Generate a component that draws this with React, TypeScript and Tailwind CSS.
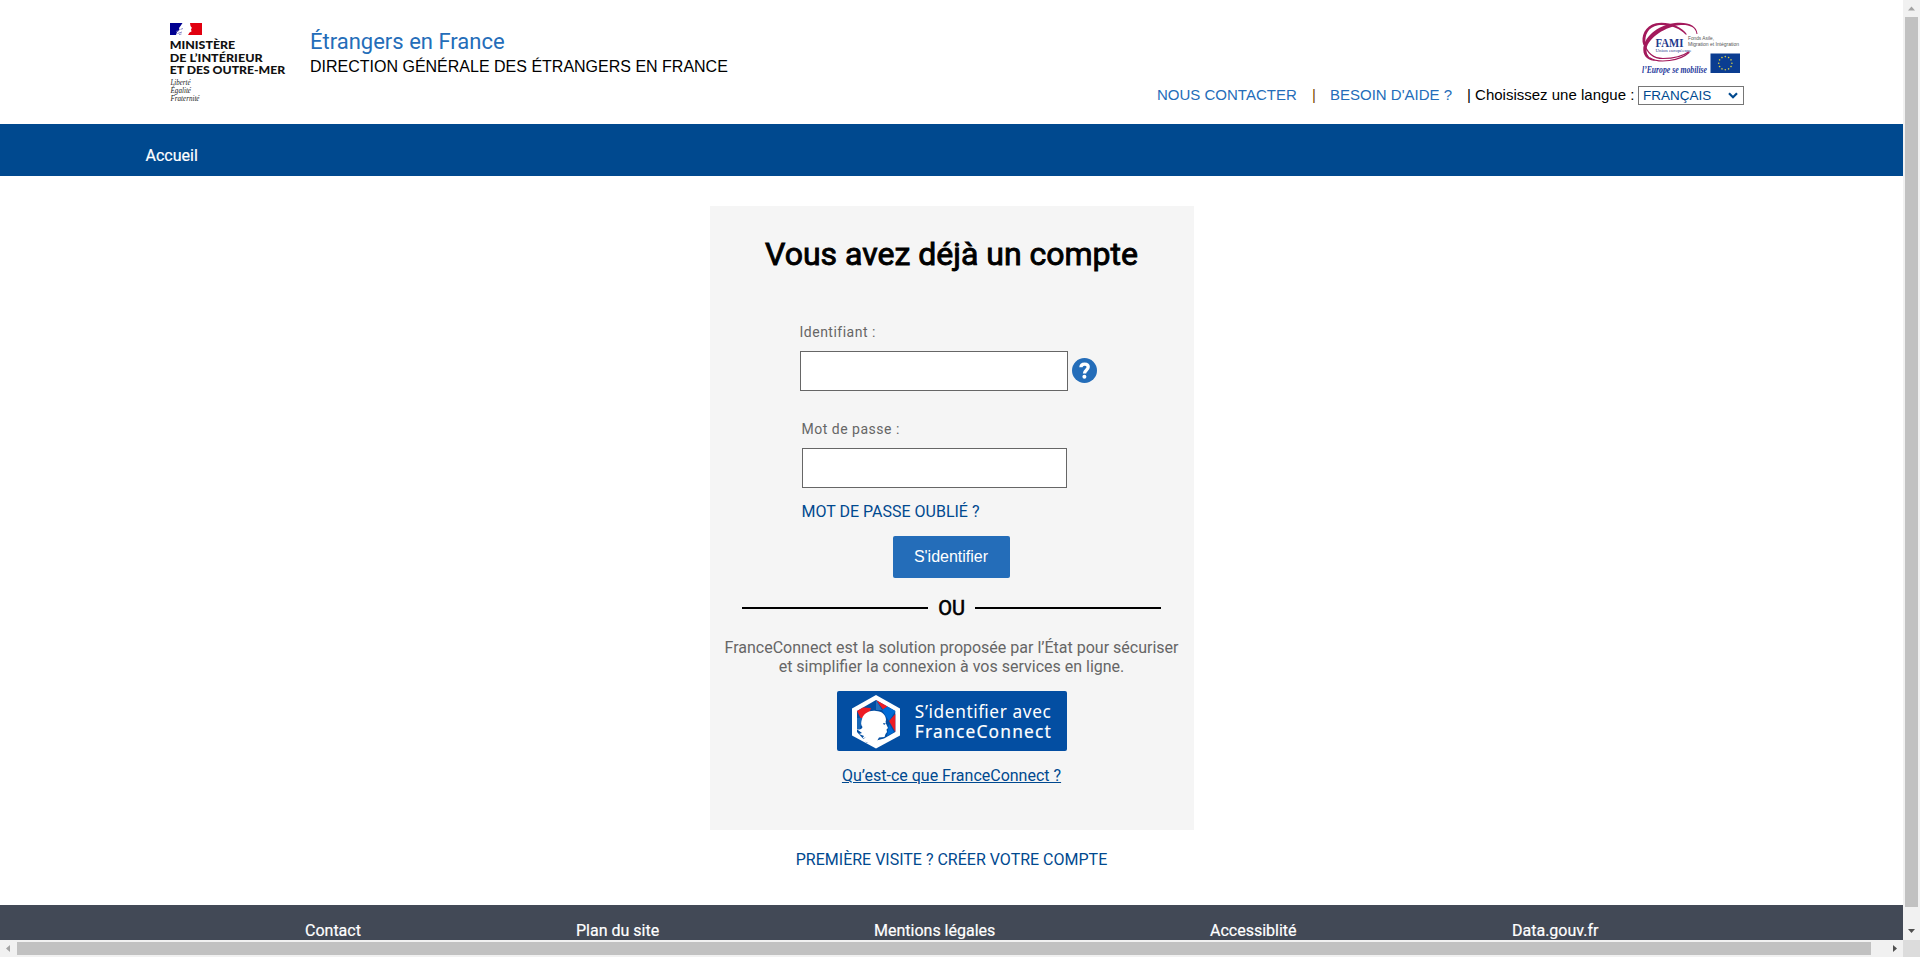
import React from "react";

const footerLinks = [
  { label: "Contact", cell: "w-[271px]" },
  { label: "Plan du site", cell: "w-[298px]" },
  { label: "Mentions légales", cell: "w-[336px]" },
  { label: "Accessiblité", cell: "w-[302px]" },
  { label: "Data.gouv.fr", cell: "w-[120px]" },
];

const starAngles = [0, 30, 60, 90, 120, 150, 180, 210, 240, 270, 300, 330];

function MinistryLogo() {
  return (
    <svg width="120" height="84" viewBox="170 20 120 84" className="block shrink-0">
      <rect x="170" y="23" width="32" height="12" fill="#fff" />
      <path d="M170 23H182.500L180.500 26L179 28L179.500 30L177 32L176 35H170Z" fill="#000091" />
      <path d="M190 23H202V35H188L189.500 32.500L191.500 31.500L191 29L192 28L190.500 26Z" fill="#e1000f" />
      <path d="M176 31.500L179 30.500M177.500 33.500L182 32M180.500 29.400L183 28.500M179 34.500L181.500 34" stroke="#6d6dbb" strokeWidth=".8" fill="none" />
      <g fontFamily="Lato, sans-serif" fontWeight="900" fontSize="11.6" fill="#111">
        <text x="169.700" y="49.400" textLength="65.500" lengthAdjust="spacingAndGlyphs">MINISTÈRE</text>
        <text x="169.700" y="61.900" textLength="93" lengthAdjust="spacingAndGlyphs">DE L’INTÉRIEUR</text>
        <text x="169.700" y="74.400" textLength="115.500" lengthAdjust="spacingAndGlyphs">ET DES OUTRE-MER</text>
      </g>
      <g fontFamily="'Liberation Serif', serif" fontStyle="italic" fontSize="7.3" fill="#222">
        <text x="170.500" y="84.500" textLength="20" lengthAdjust="spacingAndGlyphs">Liberté</text>
        <text x="170.500" y="92.600" textLength="20.500" lengthAdjust="spacingAndGlyphs">Égalité</text>
        <text x="170.500" y="100.700" textLength="29" lengthAdjust="spacingAndGlyphs">Fraternité</text>
      </g>
    </svg>
  );
}

function FamiLogo() {
  return (
    <svg width="104" height="60" viewBox="0 0 104 60" className="block">
      <g fill="#a3195b">
        <path d="M56.500 13C56 6 49 3.600 41 4C26 5 8 17 6.500 28C6 35 11 39 18 40C9 40.500 3.500 36 3.300 29C3 17 17 4 35 2C47 .5 57 4 57.500 13Z" />
        <path d="M3.300 24C.5 15 5 5 16 2.200C27 0 42 5 47 13.500L45.500 13.500C40 7 28 2.800 18 4.200C8 6 4.500 14 5.500 23Z" />
      </g>
      <g fill="none" stroke="#a3195b" strokeLinecap="round">
        <path d="M4 22C7 32 13 37.500 23 37.500C33 37.500 43 35 48.500 31" strokeWidth="1.100" />
        <path d="M10 37C19 42.500 40 40 49 31.500" strokeWidth="1.200" />
      </g>
      <text x="15.500" y="25.500" fontFamily="'Liberation Serif', serif" fontWeight="700" fontSize="12" fill="#1f3a8c" textLength="28" lengthAdjust="spacingAndGlyphs">FAMI</text>
      <g fontFamily="'Liberation Sans', sans-serif" fontSize="5" fill="#555">
        <text x="48" y="19.300" textLength="26" lengthAdjust="spacingAndGlyphs">Fonds Asile,</text>
        <text x="48" y="24.500" textLength="51" lengthAdjust="spacingAndGlyphs">Migration et Intégration</text>
      </g>
      <text x="15.500" y="31.300" fontFamily="'Liberation Serif', serif" fontSize="5" fill="#1f3a8c" textLength="36" lengthAdjust="spacingAndGlyphs">Union européenne</text>
      <text x="2" y="52" fontFamily="'Liberation Serif', serif" fontStyle="italic" fontWeight="700" fontSize="9.500" fill="#1f3a9c" textLength="65" lengthAdjust="spacingAndGlyphs">l’Europe se mobilise</text>
      <rect x="70.500" y="32.500" width="29.500" height="19.500" fill="#0b3d91" />
      {starAngles.map((angle) => (
        <circle key={angle} cx="85.300" cy="35.600" r=".8" fill="#d8cf45" transform={`rotate(${angle} 85.3 42.2)`} />
      ))}
    </svg>
  );
}

function HelpIcon() {
  return (
    <svg width="25" height="25" viewBox="0 0 25 25" className="mb-[1px] block">
      <circle cx="12.500" cy="12.500" r="12.500" fill="#246db9" />
      <path d="M8.900 9.300C9 7 10.500 6.200 12.600 6.200C14.800 6.200 16.200 7.200 16.200 9.100C16.200 12 12.500 12 12.500 15.600" fill="none" stroke="#fff" strokeWidth="3.300" />
      <circle cx="12.400" cy="18.800" r="2" fill="#fff" />
    </svg>
  );
}

function FranceConnectButton() {
  return (
    <button type="button" aria-label="S’identifier avec FranceConnect" className="block h-[60px] w-[230px]">
      <svg width="230" height="60" viewBox="0 0 230 60" className="block">
        <rect width="230" height="60" rx="2" fill="#034ea2" />
        <path d="M39 4L63 17.500V44.500L39 57.500L15 44.500V17.500Z" fill="#fff" />
        <path d="M39 9L58.300 20V41L47 47.500L30 52L20 41V20Z" fill="#034ea2" />
        <path d="M39 9L50.500 15.600L46 18.500Z" fill="#ed1c24" />
        <path d="M26 16.500L34 17L32 23L24 28L20 20Z" fill="#ed1c24" />
        <path d="M50.500 15.600L58.300 20L52 30L45 19Z" fill="#006bd6" />
        <path d="M58.300 23V41L52 30Z" fill="#ed1c24" />
        <path d="M39 9L45 19H39Z" fill="#2271bd" />
        <path d="M20 27L25 27L23 38L20 38Z" fill="#1767b8" />
        <path d="M52 33L57 41L50 45Z" fill="#006bd6" />
        <path d="M25 28C26.500 22 33 19 39 20C45 20 49 24 49 29C48 31 49 33 51 37L49.500 38.500L50 41L48.500 43L47.500 46L42 46.500L40 50L39 56L25 49L29 46L25 48L27 45L22 43L25 42L19.500 38C23 39 25 38 25.500 36C23.500 34 24 31 25 28Z" fill="#fff" />
        <path d="M46 32L49 32.500L47 34Z" fill="#034ea2" />
        <g fontFamily="'Noto Sans', sans-serif" fill="#fff">
          <text x="77.800" y="26.800" fontSize="17.300" fontWeight="400" textLength="136" lengthAdjust="spacing">S’identifier avec</text>
          <text x="77.800" y="46.800" fontSize="17.300" fontWeight="400" stroke="#fff" strokeWidth=".2" textLength="136" lengthAdjust="spacing">FranceConnect</text>
        </g>
      </svg>
    </button>
  );
}

function Header() {
  return (
    <header className="flex h-[124px] justify-between pl-[170px] pr-[159px]">
      <div className="flex pt-5">
        <MinistryLogo />
        <div className="pl-5 pt-2">
          <p className="h-[27px] whitespace-nowrap text-[22px] leading-[28px] text-[#246db9]">Étrangers en France</p>
          <p className="whitespace-nowrap font-['Liberation_Sans',Arial,sans-serif] text-base leading-6 text-black">
            DIRECTION GÉNÉRALE DES ÉTRANGERS EN FRANCE
          </p>
        </div>
      </div>
      <div className="flex flex-col items-end pt-[21px] font-['Liberation_Sans',Arial,sans-serif] text-[15px]">
        <FamiLogo />
        <div className="mt-[5px] flex h-[19px] items-center whitespace-nowrap leading-[19px] text-black">
          <a className="w-[155px] pb-[2px] text-[#246db9]">NOUS CONTACTER</a>
          <span className="w-[18px] pb-[2px] text-[#7a4a00]">|</span>
          <a className="w-[137px] pb-[2px] text-[#246db9]">BESOIN D'AIDE ?</a>
          <span className="w-[171px] pb-[2px]">| Choisissez une langue :</span>
          <button type="button" className="flex h-[19px] w-[106px] items-center justify-between border border-[#767676] bg-white pl-1 pr-[5px] text-[13.5px] leading-[17px] text-[#00498f]">
            FRANÇAIS
            <svg width="10" height="7" viewBox="0 0 10 7">
              <path d="M1 1.200L5 5.200L9 1.200" fill="none" stroke="#00498f" strokeWidth="2.200" />
            </svg>
          </button>
        </div>
      </div>
    </header>
  );
}

function LoginCard() {
  return (
    <section className="h-[624px] w-[484px] bg-[#f5f5f5] pt-[30px]">
      <h1 className="text-center text-[32px] font-normal leading-9 text-black [-webkit-text-stroke:0.9px_black]">Vous avez déjà un compte</h1>
      <div className="ml-[90px] mt-[50px]">
        <label className="block h-[29px] text-sm leading-[20px] tracking-[0.5px] text-[#666]">Identifiant :</label>
        <div className="flex items-center gap-1">
          <input className="h-10 w-[268px] border border-[#666] bg-white" />
          <HelpIcon />
        </div>
      </div>
      <div className="ml-[92px] mt-[28px]">
        <label className="block h-[29px] text-sm leading-[20px] tracking-[0.5px] text-[#666]">Mot de passe :</label>
        <input type="password" className="block h-10 w-[265px] border border-[#666] bg-white" />
        <a className="mt-[14px] block text-base leading-5 text-[#00498f]">MOT DE PASSE OUBLIÉ ?</a>
      </div>
      <button type="button" className="ml-[183px] mt-[14px] block h-[42px] w-[117px] rounded-[2px] bg-[#246db9] font-['Liberation_Sans',Arial,sans-serif] text-base text-white">
        S'identifier
      </button>
      <div className="ml-8 mt-[18px] flex h-6 w-[420px] items-center justify-between">
        <span className="h-[2px] w-[186px] bg-black" />
        <span className="text-[20px] leading-6 text-black [-webkit-text-stroke:0.6px_black]">OU</span>
        <span className="h-[2px] w-[186px] bg-black" />
      </div>
      <p className="mt-[18px] text-center text-base leading-[19px] text-[#666]">
        FranceConnect est la solution proposée par l’État pour sécuriser
        <br />
        et simplifier la connexion à vos services en ligne.
      </p>
      <div className="ml-[127px] mt-[15px]">
        <FranceConnectButton />
      </div>
      <p className="mt-[15px] text-center text-base leading-5 text-[#00498f] underline">Qu’est-ce que FranceConnect ?</p>
    </section>
  );
}

function VerticalScrollbar() {
  return (
    <div className="flex h-[940px] w-[17px] flex-col items-center bg-[#f1f1f1]">
      <svg width="17" height="17" viewBox="0 0 17 17" className="block">
        <path d="M8.500 6.500L12 10.500H5Z" fill="#a3a3a3" />
      </svg>
      <div className="h-[890px] w-[13px] bg-[#c1c1c1]" />
      <svg width="17" height="17" viewBox="0 0 17 17" className="mt-auto block">
        <path d="M5 6H12L8.500 10Z" fill="#505050" />
      </svg>
    </div>
  );
}

function HorizontalScrollbar() {
  return (
    <div className="flex h-[17px] w-[1903px] items-center bg-[#f1f1f1]">
      <svg width="17" height="17" viewBox="0 0 17 17" className="block">
        <path d="M6 8.500L10 5V12Z" fill="#a3a3a3" />
      </svg>
      <div className="h-[13px] w-[1854px] bg-[#c1c1c1]" />
      <svg width="17" height="17" viewBox="0 0 17 17" className="ml-auto block">
        <path d="M7 5L11 8.500L7 12Z" fill="#505050" />
      </svg>
    </div>
  );
}

export default function App() {
  return (
    <div className="h-[957px] w-[1920px] overflow-hidden bg-white font-[Roboto,sans-serif]">
      <div className="flex h-[940px]">
        <div className="flex h-[940px] w-[1903px] flex-col overflow-hidden">
          <Header />
          <nav className="h-[52px] shrink-0 bg-[#00498f] pl-[145.500px] pt-[22px]">
            <a className="block text-base leading-5 text-white [-webkit-text-stroke:0.2px_white]">Accueil</a>
          </nav>
          <main className="flex h-[729px] shrink-0 flex-col items-center pt-[30px]">
            <LoginCard />
            <a className="mt-5 block text-base leading-5 text-[#00498f]">PREMIÈRE VISITE ? CRÉER VOTRE COMPTE</a>
          </main>
          <footer className="flex h-[35px] shrink-0 bg-[#424956] pl-[305px] pt-4 text-base leading-5 text-white">
            {footerLinks.map((link) => (
              <a key={link.label} className={`block shrink-0 whitespace-nowrap [-webkit-text-stroke:0.2px_white] ${link.cell}`}>
                {link.label}
              </a>
            ))}
          </footer>
        </div>
        <VerticalScrollbar />
      </div>
      <div className="flex h-[17px]">
        <HorizontalScrollbar />
        <div className="h-[17px] w-[17px] bg-[#dcdcdc]" />
      </div>
    </div>
  );
}
